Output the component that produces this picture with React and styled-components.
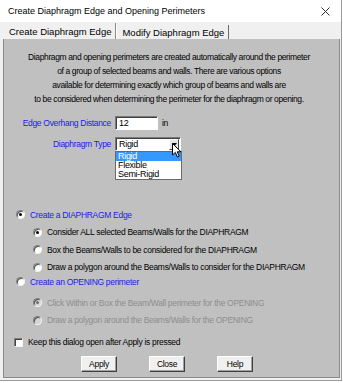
import React from 'react';
import styled, { createGlobalStyle } from 'styled-components';

const Global = createGlobalStyle`
    html, body {
        margin: 0;
        padding: 0;
        background: #ffffff;
    }
    body {
        font-family: "Liberation Sans", Arial, sans-serif;
        font-size: 8.5px;
        letter-spacing: -0.3px;
        color: #000;
        white-space: nowrap;
    }
`;

const Window = styled.div`
    width: 342px;
    height: 381px;
    display: flex;
    flex-direction: column;
    background: #f0f0f0;
    border-right: 1px solid #9a9a9a;
    border-bottom: 1px solid #9a9a9a;
    box-sizing: border-box;
    overflow: hidden;
`;

const TitleBar = styled.div`
    flex: none;
    height: 22px;
    display: flex;
    align-items: center;
    justify-content: space-between;
    padding: 0 11px 0 8px;
    background: #fff;
    font-size: 9px;
    letter-spacing: 0;
`;

const CloseBtn = styled.span`
    display: flex;
    align-items: center;
`;

const TabStrip = styled.div`
    flex: none;
    height: 17px;
    display: flex;
    align-items: flex-end;
    padding-left: 4px;
`;

const Tab = styled.div`
    height: ${p => (p.$active ? '16px' : '14px')};
    padding: 0 4px 0 5px;
    display: flex;
    align-items: center;
    font-size: 9.5px;
    letter-spacing: 0;
    border-right: 1px solid ${p => (p.$active ? '#8a8a8a' : '#6a6a6a')};
    ${p => !p.$active && 'border-left: 1px solid #fff;'}
`;

const Panel = styled.div`
    flex: 1;
    min-height: 0;
    margin: 0 1px 2px 3px;
    background: #c0c0c0;
    border-left: 1px solid #8a8a8a;
    border-right: 1px solid #8a8a8a;
    border-bottom: 1px solid #8a8a8a;
    display: flex;
    flex-direction: column;
    padding-top: 11px;
`;

const Intro = styled.p`
    margin: 0;
    text-align: center;
    line-height: 14px;
    letter-spacing: -0.38px;
    padding-right: 5px;
`;

const FieldRow = styled.div`
    display: flex;
    align-items: center;
    gap: 4px;
    margin-top: ${p => p.$top || 0}px;
`;

const Label = styled.span`
    width: 107px;
    color: #1a1aee;
    text-align: right;
    flex: none;
`;

const TextBox = styled.div`
    width: 43px;
    height: 14px;
    box-sizing: border-box;
    background: #fff;
    border: 1px solid;
    border-color: #7a7a7a #fff #fff #7a7a7a;
    box-shadow: inset 1px 1px 0 #404040;
    padding-left: 3px;
    display: flex;
    align-items: center;
    font-size: 9px;
`;

const ComboWrap = styled.div`
    position: relative;
    width: 66px;
`;

const Combo = styled.div`
    height: 14px;
    box-sizing: border-box;
    background: #fff;
    border: 1px solid;
    border-color: #7a7a7a #fff #fff #7a7a7a;
    box-shadow: inset 1px 1px 0 #404040;
    display: flex;
    align-items: center;
    justify-content: space-between;
    padding-left: 3px;
    font-size: 9px;
`;

const ComboArrow = styled.div`
    width: 10px;
    height: 11px;
    margin-right: 1px;
    background: #e4e4e4;
    border: 1px solid;
    border-color: #fff #404040 #404040 #fff;
    box-sizing: border-box;
    display: flex;
    align-items: center;
    justify-content: center;
`;

const DropList = styled.div`
    position: absolute;
    left: 0;
    top: 14px;
    width: 67px;
    background: #fff;
    border: 1px solid #6a6a6a;
    box-sizing: border-box;
    display: flex;
    flex-direction: column;
    font-size: 9px;
`;

const DropItem = styled.div`
    height: 9px;
    line-height: 9px;
    padding-left: 2px;
    background: ${p => (p.$selected ? '#3399ff' : '#fff')};
    color: ${p => (p.$selected ? '#fff' : '#000')};
`;

const Cursor = styled.svg`
    position: absolute;
    left: 57px;
    top: 6px;
`;

const Options = styled.div`
    display: flex;
    flex-direction: column;
    margin-top: 55px;
    padding-left: 12px;
`;

const OptionRow = styled.div`
    display: flex;
    align-items: center;
    gap: 5px;
    height: 17.5px;
    margin-top: ${p => p.$top || 0}px;
    padding-left: ${p => (p.$sub ? 17 : 0)}px;
    color: ${p => (p.$disabled ? '#8e8e8e' : p.$blue ? '#1a1aee' : '#000')};
`;

const Radio = styled.span`
    width: 9px;
    height: 9px;
    border-radius: 50%;
    box-sizing: border-box;
    background: ${p => (p.$disabled ? '#d4d4d4' : '#fff')};
    border: 1px solid;
    border-color: #808080 #f4f4f4 #f4f4f4 #808080;
    box-shadow: inset 1px 1px 0 #505050;
    display: flex;
    align-items: center;
    justify-content: center;
    flex: none;

    &::after {
        content: '';
        width: 3px;
        height: 3px;
        border-radius: 50%;
        background: ${p => (p.$disabled ? '#707070' : '#000')};
        display: ${p => (p.$checked ? 'block' : 'none')};
    }
`;

const CheckRow = styled.div`
    display: flex;
    align-items: center;
    gap: 5px;
    margin-top: 8px;
    padding-left: 10px;
`;

const CheckBox = styled.span`
    width: 9px;
    height: 9px;
    flex: none;
    box-sizing: border-box;
    background: #fff;
    border: 1px solid;
    border-color: #808080 #f4f4f4 #f4f4f4 #808080;
    box-shadow: inset 1px 1px 0 #404040;
`;

const ButtonBar = styled.div`
    display: flex;
    gap: 32px;
    margin-top: 9px;
    padding-left: 77px;
`;

const Button = styled.div`
    width: 36px;
    height: 16px;
    box-sizing: border-box;
    background: #f0f0f0;
    border: 1px solid;
    border-color: #fff #404040 #404040 #fff;
    box-shadow: inset -1px -1px 0 #a0a0a0;
    display: flex;
    align-items: center;
    justify-content: center;
`;

const App = () => {
    return (
        <>
            <Global />
            <Window>
                <TitleBar>
                    <span>Create Diaphragm Edge and Opening Perimeters</span>
                    <CloseBtn>
                        <svg width="9" height="9" viewBox="0 0 9 9">
                            <path d="M0.5 0.5 L8.5 8.5 M8.5 0.5 L0.5 8.5" stroke="#333" strokeWidth="1" />
                        </svg>
                    </CloseBtn>
                </TitleBar>
                <TabStrip>
                    <Tab $active>Create Diaphragm Edge</Tab>
                    <Tab>Modify Diaphragm Edge</Tab>
                </TabStrip>
                <Panel>
                    <Intro>
                        Diaphragm and opening perimeters are created automatically around the perimeter<br />
                        of a group of selected beams and walls. There are various options<br />
                        available for determining exactly which group of beams and walls are<br />
                        to be considered when determining the perimeter for the diaphragm or opening.
                    </Intro>

                    <FieldRow $top={10}>
                        <Label>Edge Overhang Distance</Label>
                        <TextBox>12</TextBox>
                        <span>in</span>
                    </FieldRow>

                    <FieldRow $top={7}>
                        <Label>Diaphragm Type</Label>
                        <ComboWrap>
                            <Combo>
                                Rigid
                                <ComboArrow>
                                    <svg width="5" height="3" viewBox="0 0 5 3">
                                        <path d="M0 0 H5 L2.5 3 Z" fill="#000" />
                                    </svg>
                                </ComboArrow>
                            </Combo>
                            <DropList>
                                <DropItem $selected>Rigid</DropItem>
                                <DropItem>Flexible</DropItem>
                                <DropItem>Semi-Rigid</DropItem>
                            </DropList>
                            <Cursor width="10" height="15" viewBox="0 0 10 15">
                                <path d="M0.5 0.5 V12 L3.3 9.4 L5.4 14 L7.2 13.2 L5.2 8.8 H9 Z" fill="#fff" stroke="#000" strokeWidth="1" />
                            </Cursor>
                        </ComboWrap>
                    </FieldRow>

                    <Options>
                        <OptionRow $blue>
                            <Radio $checked />
                            Create a DIAPHRAGM Edge
                        </OptionRow>
                        <OptionRow $sub>
                            <Radio $checked />
                            Consider ALL selected Beams/Walls for the DIAPHRAGM
                        </OptionRow>
                        <OptionRow $sub>
                            <Radio />
                            Box the Beams/Walls to be considered for the DIAPHRAGM
                        </OptionRow>
                        <OptionRow $sub>
                            <Radio />
                            Draw a polygon around the Beams/Walls to consider for the DIAPHRAGM
                        </OptionRow>
                        <OptionRow $blue $top={-3}>
                            <Radio />
                            Create an OPENING perimeter
                        </OptionRow>
                        <OptionRow $sub $disabled $top={3.5}>
                            <Radio $checked $disabled />
                            Click Within or Box the Beam/Wall perimeter for the OPENING
                        </OptionRow>
                        <OptionRow $sub $disabled>
                            <Radio $disabled />
                            Draw a polygon around the Beams/Walls for the OPENING
                        </OptionRow>
                    </Options>

                    <CheckRow>
                        <CheckBox />
                        Keep this dialog open after Apply is pressed
                    </CheckRow>

                    <ButtonBar>
                        <Button>Apply</Button>
                        <Button>Close</Button>
                        <Button>Help</Button>
                    </ButtonBar>
                </Panel>
            </Window>
        </>
    );
};

export default App;
